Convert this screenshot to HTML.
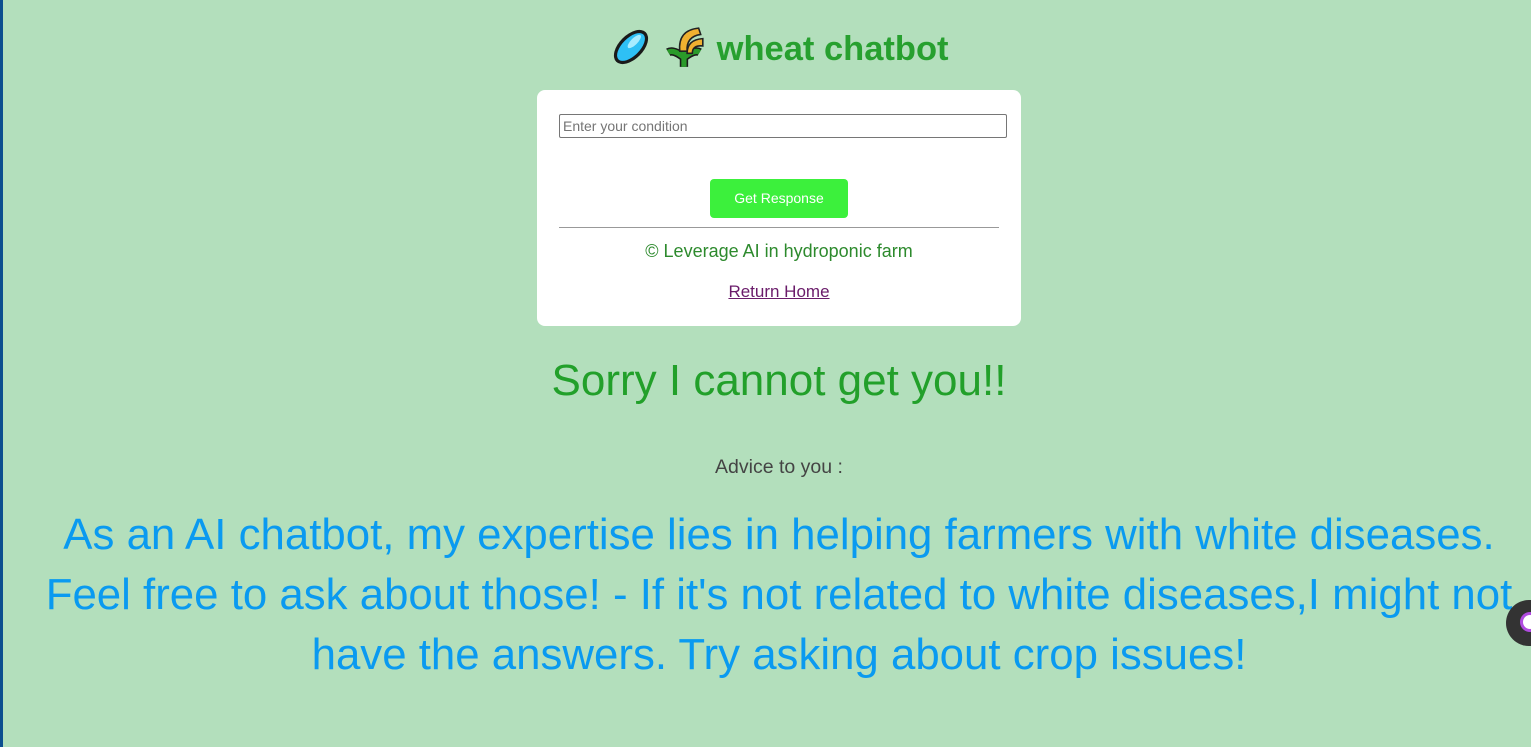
<!DOCTYPE html>
<html><head><meta charset="utf-8"><style>
html,body{margin:0;padding:0}
body{width:1531px;height:747px;background:#b3dfbc;font-family:"Liberation Sans",sans-serif;overflow:hidden;position:relative}
.bar{position:absolute;left:0;top:0;width:3px;height:747px;background:#0c4f8f}
.c{position:absolute;left:27px;right:0;top:0;text-align:center}
h1{margin:0;position:absolute;left:0;right:0;top:26px;font-size:34.5px;color:#27a02f;font-weight:bold;line-height:40px}
.card{position:absolute;left:510px;top:90px;width:484px;height:236px;background:#fff;border-radius:8px}
.inp{position:absolute;left:22px;top:24px;width:448px;height:24px;border:1px solid #767676;border-radius:2px;box-sizing:border-box;text-align:left;font-size:14px;color:#757575;padding-left:3px;line-height:22px}
.btn{position:absolute;left:173px;top:89px;width:138px;height:39px;background:#3cf03c;border-radius:4px;color:#fff;font-size:14px;line-height:39px}
.hr{position:absolute;left:22px;top:137px;width:440px;height:1px;background:#999}
.cp{position:absolute;left:0;right:0;top:151px;font-size:18px;color:#2d8a2d}
.rh{position:absolute;left:0;right:0;top:192px;font-size:17px;color:#6a1b6a;text-decoration:underline}
.sorry{position:absolute;left:0;right:0;top:354px;font-size:44px;color:#22a02a;line-height:54px}
.adv{position:absolute;left:0;right:0;top:456px;font-size:19.5px;color:#444}
.p{position:absolute;left:-60px;right:-60px;top:505px;font-size:43.8px;line-height:60px;color:#0a9af0;white-space:nowrap}
.bub{position:absolute;left:1506px;top:600px;width:50px;height:46px;border-radius:23px;background:#333}
.bub i{position:absolute;left:14px;top:12px;width:20px;height:20px;border-radius:50%;background:#fff;border:3px solid #b04be0;box-sizing:border-box}
</style></head><body>
<div class="bar"></div>
<div class="c">
<h1><span style="display:inline-block;width:44px;height:40px;vertical-align:-8px"><svg width="44" height="42" viewBox="0 0 40 38"><ellipse cx="20" cy="19" rx="11" ry="19" transform="rotate(45 20 19)" fill="#1a1a1a"/><ellipse cx="20" cy="19" rx="8" ry="16" transform="rotate(45 20 19)" fill="#2ec0f5"/><ellipse cx="23" cy="14" rx="3" ry="8" transform="rotate(45 23 14)" fill="#a8ecff"/></svg></span>
<span style="display:inline-block;width:44px;height:40px;vertical-align:-8px"><svg width="44" height="42" viewBox="0 0 42 40"><path d="M20 39 V20 M20 30 Q10 22 5 25 M20 30 Q30 22 35 25" stroke="#1a1a1a" stroke-width="8" fill="none"/><path d="M20 39 V20 M20 30 Q10 22 5 25 M20 30 Q30 22 35 25" stroke="#2a9a2a" stroke-width="5" fill="none"/><path d="M16 24 Q14 4 34 2 L36 8 Q22 10 23 24Z" fill="#f0b030" stroke="#222" stroke-width="1.5"/><path d="M23 26 Q23 13 38 12 L38 19 Q28 18 28 26Z" fill="#f0b030" stroke="#222" stroke-width="1.5"/></svg></span>
wheat chatbot</h1>
<div class="card">
<div class="inp">Enter your condition</div>
<div class="btn">Get Response</div>
<div class="hr"></div>
<div class="cp">© Leverage AI in hydroponic farm</div>
<div class="rh">Return Home</div>
</div>
<div class="sorry">Sorry I cannot get you!!</div>
<div class="adv">Advice to you :</div>
<div class="p">As an AI chatbot, my expertise lies in helping farmers with white diseases.<br>Feel free to ask about those! - If it's not related to white diseases,I might not<br>have the answers. Try asking about crop issues!</div>
</div>
<div class="bub"><i></i></div>
</body></html>
